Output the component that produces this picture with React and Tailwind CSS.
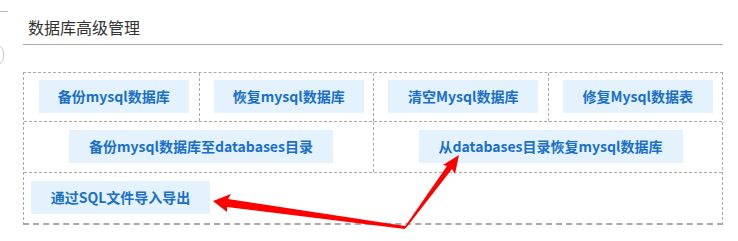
export default function App() {
  const font = { fontFamily: '"Microsoft YaHei", "Noto Sans CJK SC", sans-serif' };
  const btn =
    "h-[33px] flex items-center justify-center bg-[#e3f2fd] text-[#1a6fc7] text-[14px] font-bold";

  return (
    <div
      className="relative w-[738px] h-[241px] bg-white overflow-hidden font-['Noto_Sans_CJK_SC',sans-serif]"
      style={font}
    >
      {/* page edge bits */}
      <div className="absolute left-0 top-[11px] w-[8px] h-px bg-[#bbb]" />
      <div className="absolute left-[-14px] top-[44px] w-[18px] h-[22px] rounded-full border border-[#ccc]" />

      <div className="pl-[23px] pt-[15px]">
        <div className="w-[700px] border-b border-[#aaa] pb-[5px]">
          <h2 className="pl-[5px] text-[16px] leading-[24px] text-[#333]">数据库高级管理</h2>
        </div>

        <div className="mt-[27px] w-[700px] border border-dashed border-[#aaa] border-b-2">
          <div className="grid grid-cols-4 h-[49px] border-b border-dashed border-[#aaa]">
            {["备份mysql数据库", "恢复mysql数据库", "清空Mysql数据库", "修复Mysql数据表"].map((t, i) => (
              <div
                key={t}
                className={`flex items-start justify-center pt-[7px] pl-[5px] ${
                  i > 0 ? "border-l border-dashed border-[#aaa]" : ""
                }`}
              >
                <button className={`${btn} w-[150px]`}>{t}</button>
              </div>
            ))}
          </div>

          <div className="grid grid-cols-2 h-[51px] border-b border-dashed border-[#aaa]">
            <div className="flex items-start justify-center pt-[8px] pl-[5px]">
              <button className={`${btn} w-[264px]`}>备份mysql数据库至databases目录</button>
            </div>
            <div className="flex items-start justify-center pt-[8px] pl-[5px] border-l border-dashed border-[#aaa]">
              <button className={`${btn} w-[264px]`}>从databases目录恢复mysql数据库</button>
            </div>
          </div>

          <div className="h-[50px] pt-[8px] pl-[7px]">
            <button className={`${btn} w-[179px]`}>通过SQL文件导入导出</button>
          </div>
        </div>
      </div>

      {/* red annotation arrows */}
      <svg className="absolute inset-0 pointer-events-none" width="738" height="241" viewBox="0 0 738 241">
        <polygon
          fill="#ff0000"
          points="213,201 231,194 228,199 405,226 405,229 227,207 227,212"
        />
        <polygon
          fill="#ff0000"
          points="459,155 455,174 452,169 406,228 404,228 447,166 443,165"
        />
      </svg>
    </div>
  );
}
